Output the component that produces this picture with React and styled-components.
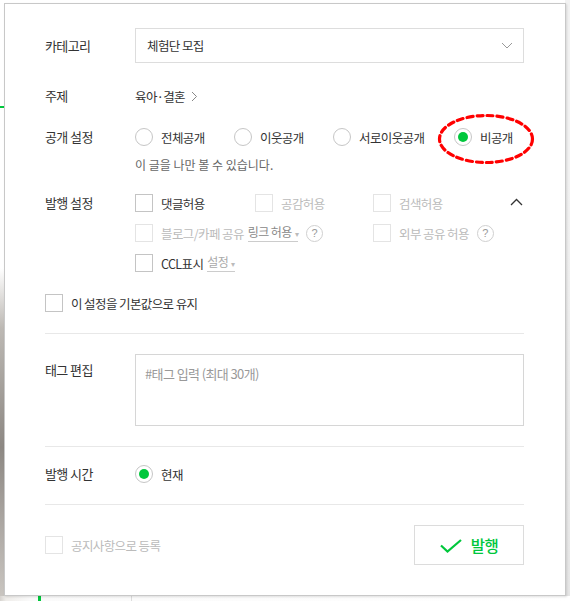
import React from 'react';
import styled, { createGlobalStyle } from 'styled-components';

const GREEN = '#00c73c';

const GlobalStyle = createGlobalStyle`
  html, body {
    margin: 0;
    padding: 0;
  }
  body {
    font-family: "Noto Sans CJK KR", "Noto Sans", sans-serif;
    background: #fff;
    color: #333;
  }
`;

export default function App() {
  return (
    <Page>
      <GlobalStyle />
      <Backdrop>
        <SideStrip>
          <GreenMark />
        </SideStrip>
        <BackdropBody />
        <RightRail />
      </Backdrop>
      <BottomBar>
        <BottomGreen />
        <BottomLine />
      </BottomBar>

      <Panel>
        <Row $h="35px" $align="center">
          <Label>카테고리</Label>
          <Select>
            <span>체험단 모집</span>
            <svg width="12" height="7" viewBox="0 0 12 7">
              <path d="M1 1l5 5 5-5" fill="none" stroke="#999" strokeWidth="1" />
            </svg>
          </Select>
        </Row>

        <Row $h="24px" $mt="21px" $align="center">
          <Label>주제</Label>
          <Topic>
            육아·결혼
            <svg width="7" height="11" viewBox="0 0 7 11">
              <path d="M1 1l4.5 4.5L1 10" fill="none" stroke="#888" strokeWidth="1" />
            </svg>
          </Topic>
        </Row>

        <Row $mt="18px">
          <Label $lh="22px">공개 설정</Label>
          <div>
            <RadioGroup>
              <RadioItem $w="99px"><Radio /><OptText>전체공개</OptText></RadioItem>
              <RadioItem $w="99px"><Radio /><OptText>이웃공개</OptText></RadioItem>
              <RadioItem $w="121px"><Radio /><OptText>서로이웃공개</OptText></RadioItem>
              <RadioItem>
                <Radio $checked />
                <OptText>비공개</OptText>
                <Highlight width="98" height="52" viewBox="0 0 98 52">
                  <ellipse cx="49" cy="26" rx="46.5" ry="23.5" fill="none" stroke="#f00"
                    strokeWidth="3.2" strokeDasharray="6 4" strokeLinecap="round" />
                </Highlight>
              </RadioItem>
            </RadioGroup>
            <Helper>이 글을 나만 볼 수 있습니다.</Helper>
          </div>
        </Row>

        <Row $mt="14px">
          <Label $lh="30px">발행 설정</Label>
          <OptionGrid>
            <Opt><Check /><OptText>댓글허용</OptText></Opt>
            <Opt><Check $disabled /><OptText $muted>공감허용</OptText></Opt>
            <Opt>
              <Check $disabled /><OptText $muted>검색허용</OptText>
              <Collapse width="13" height="8" viewBox="0 0 13 8">
                <path d="M1 7l5.5-5.5L12 7" fill="none" stroke="#333" strokeWidth="1.3" />
              </Collapse>
            </Opt>
            <Opt $span={2}>
              <Check $disabled />
              <OptText $muted>블로그/카페 공유</OptText>
              <Drop $dim>링크 허용<Caret>▾</Caret></Drop>
              <Help>?</Help>
            </Opt>
            <Opt>
              <Check $disabled /><OptText $muted>외부 공유 허용</OptText>
              <Help>?</Help>
            </Opt>
            <Opt $span={3}>
              <Check /><OptText>CCL표시</OptText>
              <Drop>설정<Caret>▾</Caret></Drop>
            </Opt>
          </OptionGrid>
        </Row>

        <KeepRow>
          <Check /><OptText>이 설정을 기본값으로 유지</OptText>
        </KeepRow>

        <Divider $mt="15px" />

        <Row $mt="20px">
          <Label $pt="6px">태그 편집</Label>
          <TagBox placeholder="#태그 입력 (최대 30개)" />
        </Row>

        <Divider $mt="20px" />

        <Row $h="22px" $mt="16px" $align="center">
          <Label>발행 시간</Label>
          <RadioItem><Radio $checked /><OptText>현재</OptText></RadioItem>
        </Row>

        <Divider $mt="19px" />

        <Footer>
          <NoticeOpt>
            <Check $disabled /><OptText $muted>공지사항으로 등록</OptText>
          </NoticeOpt>
          <PublishButton>
            <svg width="22" height="14" viewBox="0 0 22 14">
              <path d="M1 6.5l6.5 6L21 1" fill="none" stroke={GREEN} strokeWidth="2.2" />
            </svg>
            발행
          </PublishButton>
        </Footer>
      </Panel>
    </Page>
  );
}

const Page = styled.div`
  position: relative;
  width: 570px;
  height: 601px;
  overflow: hidden;
`;

const Backdrop = styled.div`
  display: flex;
  height: 596px;
`;

const SideStrip = styled.div`
  width: 5px;
  padding-top: 106px;
  background: linear-gradient(180deg, #fff 0, #fff 45%, #bdb9b4 55%, #8d8883 75%, #c9c5c0 100%);
`;

const GreenMark = styled.div`
  height: 2px;
  background: ${GREEN};
`;

const BackdropBody = styled.div`
  flex: 1;
  background: #fff;
`;

const RightRail = styled.div`
  width: 5px;
  background: linear-gradient(180deg, #f2f2f2 0, #f2f2f2 30%, #e6e6e6 100%);
`;

const BottomBar = styled.div`
  display: flex;
  height: 5px;
  background: linear-gradient(90deg, #d6d3cf 0, #efedea 6px, #fafafa 30px, #fff 100%);
`;

const BottomGreen = styled.div`
  width: 3px;
  margin-left: 38px;
  background: ${GREEN};
`;

const BottomLine = styled.div`
  width: 1px;
  margin-left: 90px;
  background: #ddd;
`;

const Panel = styled.div`
  position: absolute;
  left: 4px;
  top: 3px;
  width: 562px;
  height: 593px;
  box-sizing: border-box;
  padding: 24px 41px 0 40px;
  background: #fff;
  border: 1px solid #c8c8c8;
  box-shadow: 1px 1px 2px rgba(0, 0, 0, 0.12);
  letter-spacing: -0.6px;
`;

const Row = styled.div`
  display: grid;
  grid-template-columns: 90px 1fr;
  align-items: ${p => p.$align || 'start'};
  height: ${p => p.$h || 'auto'};
  margin-top: ${p => p.$mt || '0'};
`;

const Label = styled.div`
  font-size: 13px;
  color: #333;
  line-height: ${p => p.$lh || '20px'};
  padding-top: ${p => p.$pt || '0'};
`;

const Select = styled.div`
  height: 35px;
  box-sizing: border-box;
  border: 1px solid #ddd;
  display: flex;
  align-items: center;
  justify-content: space-between;
  padding: 0 10px 0 11px;
  font-size: 12.5px;
  color: #333;
`;

const Topic = styled.div`
  display: flex;
  align-items: center;
  gap: 6px;
  font-size: 12.5px;
  color: #333;
`;

const RadioGroup = styled.div`
  display: flex;
  align-items: center;
  height: 22px;
`;

const RadioItem = styled.div`
  position: relative;
  display: flex;
  align-items: center;
  width: ${p => p.$w || 'auto'};
  height: 22px;
`;

const Radio = styled.span`
  width: 18px;
  height: 18px;
  box-sizing: border-box;
  border-radius: 50%;
  border: 1px solid #c6c6c6;
  background: #fff;
  display: flex;
  align-items: center;
  justify-content: center;
  flex-shrink: 0;
  &::after {
    content: '';
    display: ${p => (p.$checked ? 'block' : 'none')};
    width: 10px;
    height: 10px;
    border-radius: 50%;
    background: ${GREEN};
  }
`;

const OptText = styled.span`
  margin-left: 8px;
  font-size: 12.5px;
  color: ${p => (p.$muted ? '#bbb' : '#333')};
  white-space: nowrap;
`;

const Highlight = styled.svg`
  position: absolute;
  left: -17px;
  top: -13px;
  pointer-events: none;
`;

const Helper = styled.div`
  margin-top: 8px;
  font-size: 12px;
  line-height: 18px;
  color: #666;
  letter-spacing: 0;
`;

const OptionGrid = styled.div`
  display: grid;
  grid-template-columns: 120px 118px 1fr;
  grid-auto-rows: 30px;
`;

const Opt = styled.div`
  display: flex;
  align-items: center;
  grid-column: ${p => (p.$span ? `span ${p.$span}` : 'auto')};
`;

const Check = styled.span`
  width: 18px;
  height: 18px;
  box-sizing: border-box;
  border: 1px solid ${p => (p.$disabled ? '#e4e4e4' : '#c4c4c4')};
  background: #fff;
  flex-shrink: 0;
`;

const Collapse = styled.svg`
  margin-left: auto;
  margin-right: 1px;
  margin-top: -2px;
`;

const Drop = styled.span`
  margin-left: 4px;
  font-size: 12px;
  color: ${p => (p.$dim ? '#888' : '#aaa')};
  border-bottom: 1px solid #ccc;
  line-height: 15px;
  white-space: nowrap;
`;

const Caret = styled.span`
  font-size: 8px;
  margin-left: 3px;
  color: #bbb;
`;

const Help = styled.span`
  margin-left: 8px;
  width: 17px;
  height: 17px;
  box-sizing: border-box;
  border-radius: 50%;
  border: 1px solid #d0d0d0;
  display: flex;
  align-items: center;
  justify-content: center;
  font-family: "Liberation Sans", sans-serif;
  font-size: 11px;
  color: #999;
  letter-spacing: 0;
`;

const KeepRow = styled.div`
  display: flex;
  align-items: center;
  height: 30px;
  margin-top: 10px;
`;

const Divider = styled.div`
  height: 1px;
  background: #e8e8e8;
  margin-top: ${p => p.$mt};
`;

const TagBox = styled.textarea`
  display: block;
  height: 72px;
  box-sizing: border-box;
  border: 1px solid #d6d6d6;
  resize: none;
  padding: 9px 9px;
  font-family: inherit;
  font-size: 13px;
  letter-spacing: -0.6px;
  color: #333;
  outline: none;
  &::placeholder {
    color: #999;
  }
`;

const Footer = styled.div`
  display: flex;
  align-items: center;
  justify-content: space-between;
  margin-top: 20px;
`;

const NoticeOpt = styled.div`
  display: flex;
  align-items: center;
`;

const PublishButton = styled.button`
  width: 110px;
  height: 40px;
  box-sizing: border-box;
  border: 1px solid #dcdcdc;
  background: #fff;
  display: flex;
  align-items: center;
  justify-content: center;
  gap: 9px;
  font-family: inherit;
  font-size: 15.5px;
  font-weight: 500;
  color: ${GREEN};
  letter-spacing: -0.5px;
  cursor: pointer;
  svg {
    margin-top: 1px;
  }
`;
